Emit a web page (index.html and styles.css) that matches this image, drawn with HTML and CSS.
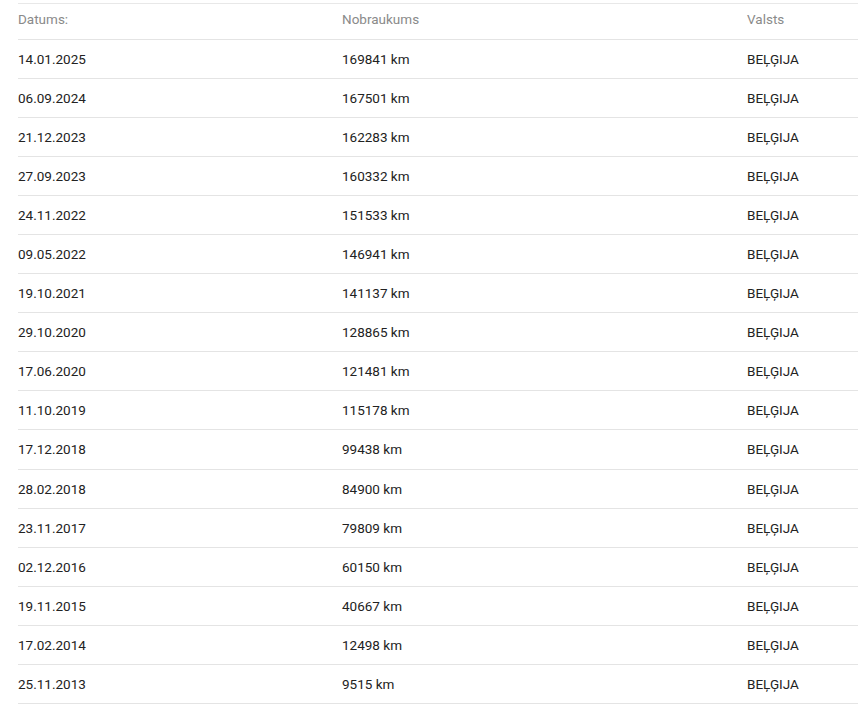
FILE: index.html
```html
<!DOCTYPE html>
<html lang="lv">
<head>
<meta charset="utf-8">
<title>Nobraukums</title>
<link rel="stylesheet" href="styles.css">
</head>
<body>
<div class="table">
  <div class="row head"><div>Datums:</div><div>Nobraukums</div><div>Valsts</div></div>
  <div class="row"><div>14.01.2025</div><div>169841 km</div><div>BEĻĢIJA</div></div>
  <div class="row"><div>06.09.2024</div><div>167501 km</div><div>BEĻĢIJA</div></div>
  <div class="row"><div>21.12.2023</div><div>162283 km</div><div>BEĻĢIJA</div></div>
  <div class="row"><div>27.09.2023</div><div>160332 km</div><div>BEĻĢIJA</div></div>
  <div class="row"><div>24.11.2022</div><div>151533 km</div><div>BEĻĢIJA</div></div>
  <div class="row"><div>09.05.2022</div><div>146941 km</div><div>BEĻĢIJA</div></div>
  <div class="row"><div>19.10.2021</div><div>141137 km</div><div>BEĻĢIJA</div></div>
  <div class="row"><div>29.10.2020</div><div>128865 km</div><div>BEĻĢIJA</div></div>
  <div class="row"><div>17.06.2020</div><div>121481 km</div><div>BEĻĢIJA</div></div>
  <div class="row"><div>11.10.2019</div><div>115178 km</div><div>BEĻĢIJA</div></div>
  <div class="row"><div>17.12.2018</div><div>99438 km</div><div>BEĻĢIJA</div></div>
  <div class="row"><div>28.02.2018</div><div>84900 km</div><div>BEĻĢIJA</div></div>
  <div class="row"><div>23.11.2017</div><div>79809 km</div><div>BEĻĢIJA</div></div>
  <div class="row"><div>02.12.2016</div><div>60150 km</div><div>BEĻĢIJA</div></div>
  <div class="row"><div>19.11.2015</div><div>40667 km</div><div>BEĻĢIJA</div></div>
  <div class="row"><div>17.02.2014</div><div>12498 km</div><div>BEĻĢIJA</div></div>
  <div class="row"><div>25.11.2013</div><div>9515 km</div><div>BEĻĢIJA</div></div>
</div>
</body>
</html>
```
FILE: styles.css
```css
html, body {
  margin: 0;
  padding: 0;
  background: #ffffff;
}
body {
  font-family: Roboto, "Liberation Sans", sans-serif;
  font-size: 13.5px;
  color: #222222;
}
.table {
  margin: 3px 0 0 18px;
  width: 840px;
  border-top: 1px solid #e8e8e8;
}
.row {
  display: grid;
  grid-template-columns: 324px 405px 1fr;
  align-items: center;
  height: 38.06px;
  border-bottom: 1px solid #e4e4e4;
}
.row.head {
  height: 35px;
  padding-bottom: 0;
  align-items: start;
  padding-top: 0;
  color: #8a8a8a;
}
.row.head > div {
  padding-top: 7px;
}
```
